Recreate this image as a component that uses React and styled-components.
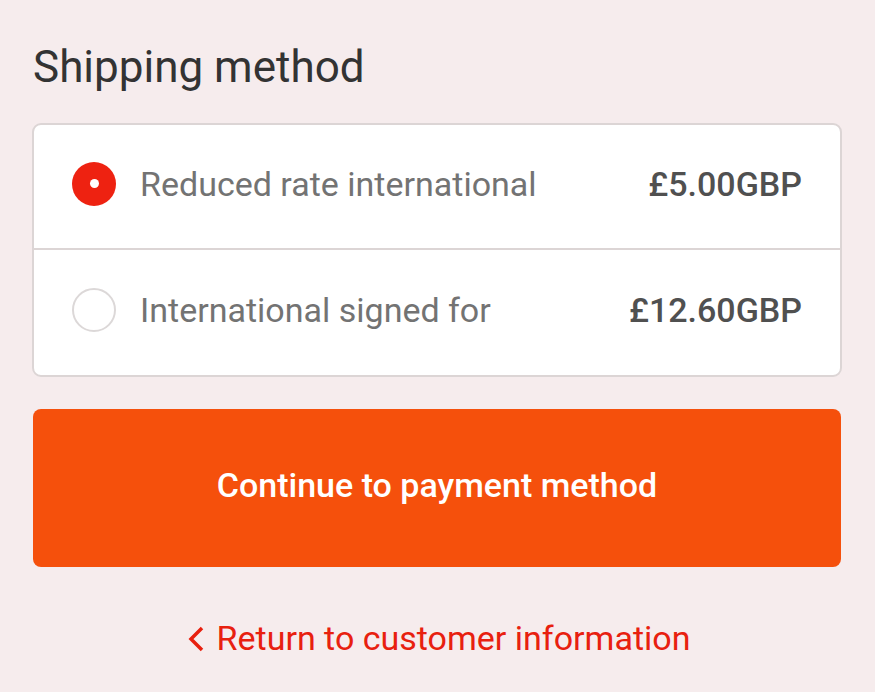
import React, { useState } from 'react';
import styled, { createGlobalStyle } from 'styled-components';

const GlobalStyle = createGlobalStyle`
  html, body {
    margin: 0;
    background: #f6eced;
  }
  body {
    font-family: Roboto, "Liberation Sans", sans-serif;
  }
`;

const Page = styled.div`
  padding: 29px 33px 40px 32px;
`;

const Title = styled.h2`
  margin: 0 0 18px 1px;
  font-size: 44px;
  font-weight: 400;
  line-height: 76px;
  color: #333333;
`;

const Card = styled.div`
  background: #ffffff;
  border: 2px solid #dcd5d5;
  border-radius: 9px;
  overflow: hidden;
`;

const Row = styled.label`
  display: flex;
  align-items: center;
  height: 123px;
  padding: 0 38px 6px 38px;
  box-sizing: border-box;
  cursor: pointer;
  & + & {
    border-top: 2px solid #dcd5d5;
    height: 127px;
  }
`;

const Radio = styled.span`
  flex: none;
  width: 44px;
  height: 44px;
  border-radius: 50%;
  box-sizing: border-box;
  display: flex;
  align-items: center;
  justify-content: center;
  background: ${p => (p.$checked ? '#ee2211' : '#ffffff')};
  border: ${p => (p.$checked ? 'none' : '2px solid #dcd8d8')};
  &::after {
    content: '';
    display: ${p => (p.$checked ? 'block' : 'none')};
    width: 9px;
    height: 9px;
    border-radius: 50%;
    background: #ffffff;
  }
`;

const Label = styled.span`
  flex: 1;
  margin-left: 24px;
  font-size: 34px;
  color: #737373;
`;

const Price = styled.span`
  font-size: 34px;
  font-weight: 500;
  color: #505050;
`;

const Button = styled.button`
  display: block;
  width: calc(100% - 2px);
  height: 158px;
  margin: 32px 1px 0;
  padding: 0 0 6px;
  border: none;
  border-radius: 8px;
  background: #f5500c;
  color: #ffffff;
  font-family: Roboto, "Liberation Sans", sans-serif;
  font-size: 34px;
  font-weight: 500;
  cursor: pointer;
`;

const BackLink = styled.a`
  display: flex;
  align-items: center;
  justify-content: center;
  gap: 13px;
  margin-top: 51px;
  padding-left: 4px;
  font-size: 34px;
  color: #e8200f;
  text-decoration: none;
  svg {
    width: 16px;
    height: 26px;
    margin-top: 2px;
  }
`;

const options = [
  { id: 'reduced', name: 'Reduced rate international', price: '£5.00GBP' },
  { id: 'signed', name: 'International signed for', price: '£12.60GBP' },
];

export default function App() {
  const [selected, setSelected] = useState('reduced');
  return (
    <>
      <GlobalStyle />
      <Page>
        <Title>Shipping method</Title>
        <Card>
          {options.map(o => (
            <Row key={o.id} onClick={() => setSelected(o.id)}>
              <Radio $checked={selected === o.id} />
              <Label>{o.name}</Label>
              <Price>{o.price}</Price>
            </Row>
          ))}
        </Card>
        <Button>Continue to payment method</Button>
        <BackLink href="#">
          <svg viewBox="0 0 16 26" fill="none" stroke="currentColor" strokeWidth="3.5" strokeLinecap="butt">
            <polyline points="14,2 3,13 14,24" />
          </svg>
          Return to customer information
        </BackLink>
      </Page>
    </>
  );
}
